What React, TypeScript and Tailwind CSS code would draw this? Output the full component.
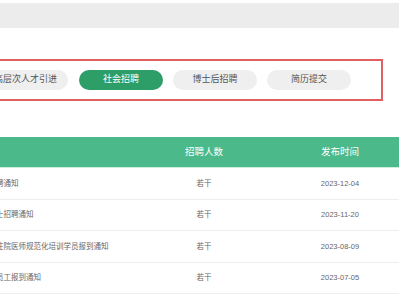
const tabs = ['高层次人才引进', '社会招聘', '博士后招聘', '简历提交'];

const rows = [
  { title: '医院社会招聘通知', count: '若干', date: '2023-12-04' },
  { title: '医院年度博士招聘通知', count: '若干', date: '2023-11-20' },
  { title: '关于本年度住院医师规范化培训学员报到通知', count: '若干', date: '2023-08-09' },
  { title: '关于新入职员工报到通知', count: '若干', date: '2023-07-05' },
];

export default function App() {
  return (
    <div
      className="w-[399px] h-[300px] overflow-hidden bg-white"
      style={{ fontFamily: '"Liberation Sans", "Noto Sans CJK SC", sans-serif' }}
    >
      <div className="pt-[3px]">
        <div className="h-[25px] bg-[#ececec]" />
      </div>

      <div className="-ml-[100px] w-[560px]">
        {/* tab strip */}
        <div className="mt-[31px] ml-[60px] w-[423px] h-[42px] border-2 border-[#e06060] flex items-center pl-[21px] gap-[10px]">
          {tabs.map((tab, i) => (
            <div
              key={tab}
              className={
                i === 1
                  ? 'w-[84px] h-[20px] rounded-full bg-[#2e9e69] text-white text-[9px] flex items-center justify-center shrink-0'
                  : i === 0
                    ? 'w-[85px] mr-[1px] h-[20px] rounded-full bg-[#efefef] text-[#555] text-[9px] flex items-center justify-center shrink-0 whitespace-nowrap'
                    : 'w-[84px] h-[20px] rounded-full bg-[#efefef] text-[#555] text-[9px] flex items-center justify-center shrink-0'
              }
            >
              {tab}
            </div>
          ))}
        </div>

        {/* list table */}
        <div className="mt-[36px]">
          <div className="h-[31px] bg-[#4cb98b] text-white text-[9.5px] flex items-center border-b border-[#cdeedd]">
            <div className="w-[250px] pl-[20px]">招聘信息</div>
            <div className="w-[108px] text-center">招聘人数</div>
            <div className="w-[164px] text-center">发布时间</div>
          </div>
          {rows.map((row) => (
            <div
              key={row.date}
              className="h-[31.5px] flex items-center border-b border-[#eeeeee] text-[7.5px] text-[#666]"
            >
              <div className="w-[250px] pl-[58.5px] whitespace-nowrap">{row.title}</div>
              <div className="w-[108px] text-center">{row.count}</div>
              <div className="w-[164px] text-center">{row.date}</div>
            </div>
          ))}
        </div>
      </div>
    </div>
  );
}
